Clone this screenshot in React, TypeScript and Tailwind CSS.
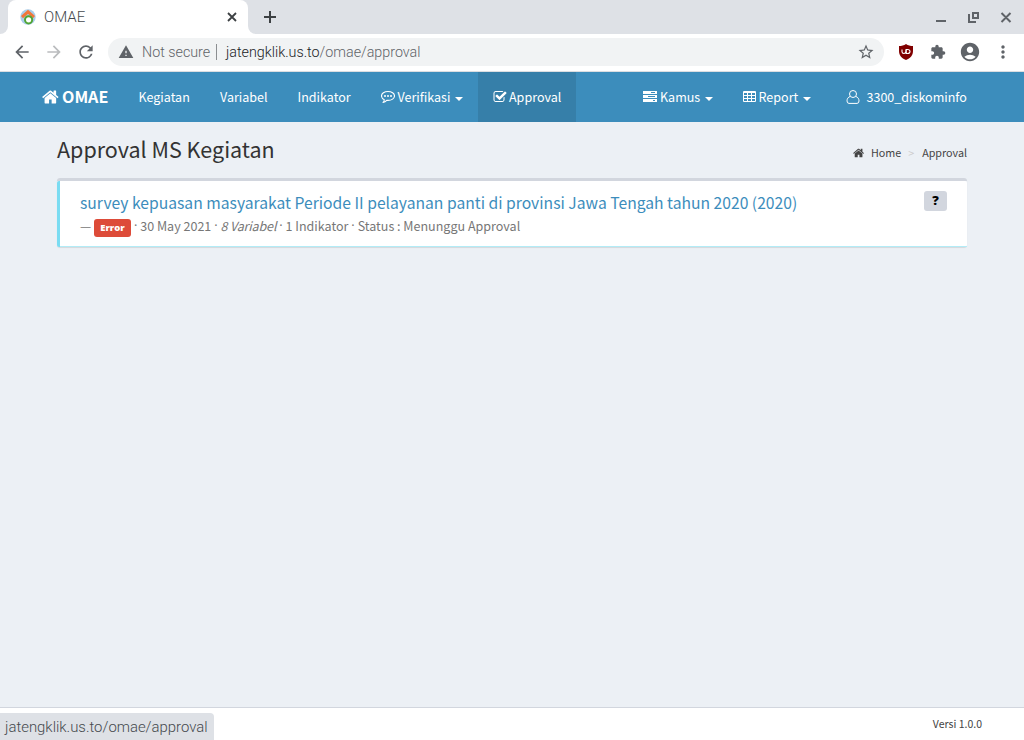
import type { ReactNode } from "react";
import { MdArrowBack, MdArrowForward, MdRefresh, MdWarning, MdStarBorder, MdExtension, MdAccountCircle, MdMoreVert } from "react-icons/md";

const HOME =
  "M1408 992v480q0 26-19 45t-45 19h-384v-384h-256v384h-384q-26 0-45-19t-19-45v-480q0-1 .5-3t.5-3l575-474 575 474q1 2 1 6zm223-69l-62 74q-8 9-21 11h-3q-13 0-21-7l-692-577-692 577q-12 8-24 7-13-2-21-11l-62-74q-8-10-7-23.5t11-21.5l719-599q32-26 76-26t76 26l244 204v-195q0-14 9-23t23-9h192q14 0 23 9t9 23v408l219 182q10 8 11 21.5t-7 23.5z";
const CHECK =
  "M1472 930v318q0 119-84.5 203.5t-203.5 84.5h-832q-119 0-203.5-84.5t-84.5-203.5v-832q0-119 84.5-203.5t203.5-84.5h832q63 0 117 25 15 7 18 23 3 17-9 29l-49 49q-10 10-23 10-3 0-9-2-23-6-45-6h-832q-66 0-113 47t-47 113v832q0 66 47 113t113 47h832q66 0 113-47t47-113v-254q0-13 9-22l64-64q10-10 23-10 6 0 12 3 20 8 20 29zm231-489l-814 814q-24 24-57 24t-57-24l-430-430q-24-24-24-57t24-57l110-110q24-24 57-24t57 24l263 263 647-647q24-24 57-24t57 24l110 110q24 24 24 57t-24 57z";

function Glyph({ d, className }: { d: string; className: string }) {
  return (
    <svg viewBox="0 0 1792 1792" fill="currentColor" className={className}>
      <path d={d} />
    </svg>
  );
}

function NavItem({ width, active, children }: { width: string; active?: boolean; children: ReactNode }) {
  return (
    <a className={`flex h-full shrink-0 items-center whitespace-nowrap pl-[15px] ${width} ${active ? "bg-[#367fa9]" : ""}`}>
      {children}
    </a>
  );
}

function Caret() {
  return (
    <svg viewBox="0 0 8 4" className="mt-[3px] ml-[5px] h-1 w-2 shrink-0" fill="currentColor">
      <path d="M0 0h8L4 4z" />
    </svg>
  );
}

function Dot() {
  return <span className="inline-block w-[9.2px] text-center font-['Noto_Sans',sans-serif]">·</span>;
}

function BrowserChrome() {
  return (
    <div className="shrink-0 font-[Roboto,sans-serif] text-[#5f6368]">
      <div className="flex h-[34px] bg-[#dee1e6]">
        <div className="flex w-2 items-end bg-white">
          <div className="h-full w-2 rounded-br-lg bg-[#dee1e6]" />
        </div>
        <div className="flex w-60 items-center rounded-t-lg bg-white pl-3">
          <svg viewBox="0 0 16 16" className="size-4 shrink-0">
            <circle cx="8" cy="8" r="7.7" fill="#a9cdea" />
            <path d="M2 8.2 8 2.8l6 5.4" fill="none" stroke="#f1773a" strokeWidth="3" />
            <circle cx="8.6" cy="10.8" r="3.6" fill="#fff" stroke="#52a535" strokeWidth="2" />
          </svg>
          <span className="ml-2 flex-1 text-[15px] font-light leading-5 text-[#45494d]">OMAE</span>
          <svg viewBox="0 0 16 16" className="mr-2 size-4 text-[#3c4043]" fill="none" stroke="currentColor" strokeWidth="1.8">
            <path d="m4 4 8 8M12 4l-8 8" />
          </svg>
        </div>
        <div className="w-2 bg-white">
          <div className="h-full w-2 rounded-bl-lg bg-[#dee1e6]" />
        </div>
        <svg viewBox="0 0 20 20" className="mt-[7px] ml-1 size-5 text-[#3c4043]" fill="none" stroke="currentColor" strokeWidth="2">
          <path d="M4 10h12M10 4v12" />
        </svg>
        <div className="ml-auto flex items-center pr-2">
          <svg viewBox="0 0 80 16" className="h-4 w-20" fill="none" stroke="#5f6368" strokeWidth="2">
            <path d="M0 12h10M33 5v8H40M37 4h5v5h-5zM65.500 4l9 9M74.500 4l-9 9" />
          </svg>
        </div>
      </div>
      <div className="flex h-[37px] items-center bg-white pb-px pl-3 text-[14.3px] font-light">
        <MdArrowBack className="size-5" />
        <MdArrowForward className="ml-3 size-5 text-[#babcbe]" />
        <MdRefresh className="ml-3 size-5" />
        <div className="ml-3 flex h-7 w-[776px] items-center rounded-full bg-[#f1f3f4] pl-[10px]">
          <MdWarning className="size-4" />
          <span className="ml-2 w-[74px] whitespace-nowrap leading-5">Not secure</span>
          <span className="mr-[9px] h-4 w-px bg-[#8b8e91]" />
          <span className="leading-5 text-[#202124]">jatengklik.us.to<span className="text-[#5f6368]">/omae/approval</span></span>
          <MdStarBorder className="mr-[9px] ml-auto size-[18px]" />
        </div>
        <svg viewBox="0 0 16 16" className="ml-[14px] size-4">
          <path d="M8 0c2 1.500 4.500 2 7 2v5c0 4.500-2.500 7-7 9-4.500-2-7-4.500-7-9V2c2.500 0 5-.5 7-2Z" fill="#800000" />
          <path d="M4 5.500v2.300q0 1.700 1.900 1.700T7.800 7.800V5.500M8.300 5.500v4h1.200q2.500 0 2.500-2t-2.500-2z" fill="none" stroke="#fff" strokeWidth="1.100" />
        </svg>
        <MdExtension className="ml-4 size-4" />
        <MdAccountCircle className="ml-[13px] size-[22px]" />
        <MdMoreVert className="ml-[11.5px] size-5" />
      </div>
      <div className="h-px bg-[#dcdee1]" />
    </div>
  );
}

function Navbar() {
  return (
    <nav className="flex h-[50px] shrink-0 bg-[#3c8dbc] pr-[42px] pl-[27px] text-[12.54px] text-white">
      <NavItem width="w-[96.5px]">
        <Glyph d={HOME} className="mr-[2px] mb-px size-[18px]" />
        <b className="mb-[2px] text-[16.1px]">OMAE</b>
      </NavItem>
      <NavItem width="w-[81.5px]">Kegiatan</NavItem>
      <NavItem width="w-[77.5px]">Variabel</NavItem>
      <NavItem width="w-[83.5px]">Indikator</NavItem>
      <NavItem width="w-[112px]">
        <svg viewBox="0 0 14 14" className="mr-[2.500px] size-[14px]" fill="none" stroke="currentColor">
          <path d="M7 1.500c3.600 0 6.500 1.900 6.500 4.400s-2.900 4.500-6.500 4.500l-1.300-.1Q4.200 12 2 12.500q1.100-1.100 1.300-2.800C1.600 8.900.5 7.500.5 5.900.5 3.400 3.400 1.500 7 1.500Z" strokeLinejoin="round" strokeWidth="1.100" />
          <g fill="currentColor" stroke="none"><circle cx="4" cy="6" r="1" /><circle cx="7" cy="6" r="1" /><circle cx="10" cy="6" r="1" /></g>
        </svg>
        Verifikasi<Caret />
      </NavItem>
      <NavItem width="w-[98px]" active>
        <Glyph d={CHECK} className="mr-[2px] size-[14px]" />Approval
      </NavItem>
      <div className="ml-auto flex">
        <NavItem width="w-[99.5px]">
          <svg viewBox="0 0 14 14" className="mr-[3px] size-[14px]" fill="currentColor" fillRule="evenodd">
            <path d="M0 1h14v3H0zM8 2v1h4V2zM0 5h14v3H0zM5 6v1h7V6zM0 9h14v3H0zM10 10v1h2v-1z" />
          </svg>
          Kamus<Caret />
        </NavItem>
        <NavItem width="w-[104px]">
          <svg viewBox="0.500 0 14 14" className="mr-[2px] size-[14px]" fill="currentColor" fillRule="evenodd">
            <path d="M1.500 1h11q1 0 1 1v9q0 1-1 1h-11q-1 0-1-1V2q0-1 1-1ZM1.500 3v2h3V3zM5.500 3v2h3V3zM9.500 3v2h3V3zM1.500 6v2h3V6zM5.500 6v2h3V6zM9.500 6v2h3V6zM1.500 9v2h3V9zM5.500 9v2h3V9zM9.500 9v2h3V9z" />
          </svg>
          Report<Caret />
        </NavItem>
        <NavItem width="w-[150.5px]">
          <svg viewBox="1 0 14 14" className="mr-[6px] size-[14px] overflow-visible" fill="none" stroke="currentColor" strokeWidth="1">
            <circle cx="7" cy="4" r="3.500" />
            <path d="M4.300 6.400C2 7.100 1 8.900 1 10.900q0 2.500 2 2.500h8q2 0 2-2.500c0-2-1-3.800-3.300-4.500" />
          </svg>
          3300_diskominfo
        </NavItem>
      </div>
    </nav>
  );
}

export default function App() {
  return (
    <div className="flex h-[740px] w-[1024px] flex-col overflow-hidden bg-[#ecf0f5] font-['Noto_Sans_CJK_SC',sans-serif] leading-5">
      <BrowserChrome />
      <Navbar />
      <main className="flex-1 px-[57px]">
        <header className="flex h-14 justify-between text-[#333]">
          <h1 className="mt-[14px] text-[21.5px] leading-[26px]">Approval MS Kegiatan</h1>
          <div className="mt-[21px] flex h-5 items-center text-[10.75px] text-[#444]">
            <Glyph d={HOME} className="mr-[6px] size-3" />
            Home<span className="mr-2 ml-[7px] text-[#ccc]">&gt;</span>Approval
          </div>
        </header>
        <section className="rounded-[3px] border-t-[3px] border-[#d2d6de] shadow-[0_1px_1px_rgba(0,0,0,0.1)]">
          <div className="rounded-[2px] border-l-[3px] border-[#7adcf2] bg-white">
            <div className="flex h-[65px] justify-between px-5">
              <div>
                <h2 className="mt-3 whitespace-nowrap text-[15.68px] leading-5 text-[#3c8dbc]">
                  survey kepuasan masyarakat Periode II pelayanan panti di provinsi Jawa Tengah tahun 2020 (2020)
                </h2>
                <div className="mt-[3px] flex h-5 items-center whitespace-pre text-[12.54px] leading-5 text-[#777]">
                  <span className="w-[14px]">—</span>
                  <b className="mt-1 flex h-[18px] w-[37px] items-center justify-center rounded-[3px] bg-[#dd4b39] font-['Open_Sans',sans-serif] text-[9.400px] font-extrabold text-white">Error</b>
                  <Dot />30 May 2021<Dot /><i className="tracking-[-0.15px]">8 Variabel</i><Dot />1 Indikator<Dot />Status : Menunggu Approval
                </div>
              </div>
              <button className="mt-[10px] flex h-5 w-[23px] items-center justify-center rounded-[3px] bg-[#d2d6de] pb-[2px] font-['Open_Sans',sans-serif] text-[13px] font-extrabold text-black">?</button>
            </div>
            <div className="h-px bg-[#b3ecf7]" />
          </div>
        </section>
      </main>
      <footer className="flex h-[33px] shrink-0 items-start justify-between border-t border-[#d2d6de] bg-white pr-[42px]">
        <div className="mt-[5px] h-[27px] w-[214px] rounded-tr bg-[#dee1e6] pl-[5px] font-[Roboto,sans-serif] text-[14.9px] font-light leading-[29px] text-[#45494d]">
          jatengklik.us.to/omae/approval
        </div>
        <span className="mt-[6px] text-[10.5px] text-[#444]">Versi 1.0.0</span>
      </footer>
    </div>
  );
}
